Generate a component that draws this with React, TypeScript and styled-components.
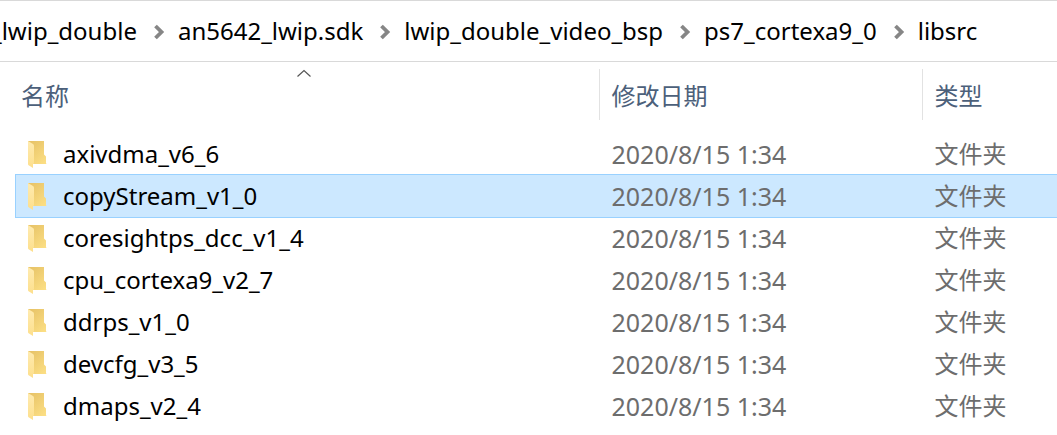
import React from 'react';
import styled, { createGlobalStyle, css } from 'styled-components';

const GlobalStyle = createGlobalStyle`
  *, *::before, *::after { box-sizing: border-box; }
  body {
    margin: 0;
    background: #fff;
    color: #000;
    font: 24px/32px "Noto Sans", "Noto Sans CJK SC", sans-serif;
    overflow: hidden;
  }
`;

const accent = '#99d1ff';

const Window = styled.main`
  border-top: 1px solid #d9d9d9;
  overflow: hidden;
`;

const AddressBar = styled.nav`
  height: 61px;
  border-bottom: 1px solid #d9d9d9;
  overflow: hidden;
`;

const Trail = styled.ol`
  display: flex;
  align-items: center;
  height: 100%;
  margin: 0 0 0 -9px;
  padding: 0;
  list-style: none;
  white-space: nowrap;
`;

const Crumb = styled.li`
  display: flex;
  align-items: center;
`;

const CrumbLink = styled.a`
  color: inherit;
  text-decoration: none;
`;

const Separator = styled.svg`
  flex: none;
  width: 12px;
  height: 16px;
  margin: 2px 13px 0 16px;
`;

const FileTable = styled.table`
  width: calc(100% - 15px);
  margin-left: 15px;
  table-layout: fixed;
  border-collapse: separate;
  border-spacing: 0;
  text-align: left;
  white-space: nowrap;
`;

const Column = styled.col<{ $width?: string }>`
  width: ${({ $width }) => $width ?? 'auto'};
`;

const HeaderCell = styled.th`
  position: relative;
  height: 71px;
  padding: 7px 0 13px;
  font-weight: 400;
  vertical-align: top;
`;

const HeaderButton = styled.button<{ $first?: boolean }>`
  display: block;
  width: 100%;
  height: 51px;
  padding: ${({ $first }) => ($first ? '2px 0 0 6px' : '2px 0 0 12px')};
  border: 0;
  border-left: ${({ $first }) => ($first ? '0' : '1px solid #e2e2e2')};
  background: none;
  color: #4c607a;
  font: inherit;
  text-align: left;
`;

const SortArrow = styled.svg`
  position: absolute;
  top: 7px;
  left: calc(50% - 10px);
  width: 14px;
  height: 9px;
`;

const Cell = styled.td`
  height: 42px;
  padding: 0 0 0 13px;
  color: #6d6d6d;
  vertical-align: middle;
`;

const DateCell = styled(Cell)`
  font-size: 25px;
`;

const Row = styled.tr<{ $selected?: boolean }>`
  ${({ $selected }) =>
    $selected &&
    css`
      ${Cell} {
        background: #cce8ff;
        box-shadow: 0 -1px 0 ${accent}, 0 1px 0 ${accent};
      }
      ${Cell}:first-child {
        box-shadow: inset 1px 0 0 ${accent}, 0 -1px 0 ${accent}, 0 1px 0 ${accent};
      }
    `}
`;

const FolderLink = styled.a`
  display: flex;
  align-items: center;
  gap: 15px;
  color: #000;
  text-decoration: none;
`;

const FolderPicture = styled.svg`
  flex: none;
  width: 20px;
  height: 28px;
`;

const crumbs = [
  '_lwip_double',
  'an5642_lwip.sdk',
  'lwip_double_video_bsp',
  'ps7_cortexa9_0',
  'libsrc',
];

const folders = [
  'axivdma_v6_6',
  'copyStream_v1_0',
  'coresightps_dcc_v1_4',
  'cpu_cortexa9_v2_7',
  'ddrps_v1_0',
  'devcfg_v3_5',
  'dmaps_v2_4',
];

const selected = 'copyStream_v1_0';

function FolderIcon() {
  return (
    <FolderPicture viewBox="0 0 20 28" aria-hidden="true">
      <defs>
        <linearGradient id="folder-back" x1="0.2" y1="0" x2="0.9" y2="1">
          <stop offset="0" stopColor="#e8c468" />
          <stop offset="1" stopColor="#fcdf85" />
        </linearGradient>
        <linearGradient id="folder-front" x1="0" y1="0" x2="0" y2="1">
          <stop offset="0" stopColor="#ffebb0" />
          <stop offset="1" stopColor="#fddf8c" />
        </linearGradient>
      </defs>
      <path d="M0 1H16V14.5L18 16.5V23.5L19 24H5L0 21Z" fill="url(#folder-back)" />
      <path d="M0 1L5 4Q6 4.6 6 6V23.5L5 24V28L1 25.5Q0 25 0 24Z" fill="url(#folder-front)" />
    </FolderPicture>
  );
}

export default function App() {
  return (
    <>
      <GlobalStyle />
      <Window>
        <AddressBar aria-label="路径">
          <Trail>
            {crumbs.map((name, i) => (
              <Crumb key={name}>
                {i > 0 && (
                  <Separator viewBox="0 0 12 16" aria-hidden="true">
                    <path d="M2.5 2L8.5 8L2.5 14" fill="none" stroke="#868686" strokeWidth="3.8" />
                  </Separator>
                )}
                <CrumbLink href="#">{name}</CrumbLink>
              </Crumb>
            ))}
          </Trail>
        </AddressBar>
        <FileTable>
          <colgroup>
            <Column $width="56%" />
            <Column $width="31%" />
            <Column />
          </colgroup>
          <thead>
            <tr>
              <HeaderCell aria-sort="ascending">
                <HeaderButton $first>名称</HeaderButton>
                <SortArrow viewBox="0 0 14 9" aria-hidden="true">
                  <path d="M0.5 7.5L7 1.5L13.5 7.5" fill="none" stroke="#555" strokeWidth="1.2" />
                </SortArrow>
              </HeaderCell>
              <HeaderCell>
                <HeaderButton>修改日期</HeaderButton>
              </HeaderCell>
              <HeaderCell>
                <HeaderButton>类型</HeaderButton>
              </HeaderCell>
            </tr>
          </thead>
          <tbody>
            {folders.map((name) => (
              <Row key={name} $selected={name === selected}>
                <Cell>
                  <FolderLink href="#">
                    <FolderIcon />
                    {name}
                  </FolderLink>
                </Cell>
                <DateCell>2020/8/15 1:34</DateCell>
                <Cell>文件夹</Cell>
              </Row>
            ))}
          </tbody>
        </FileTable>
      </Window>
    </>
  );
}
